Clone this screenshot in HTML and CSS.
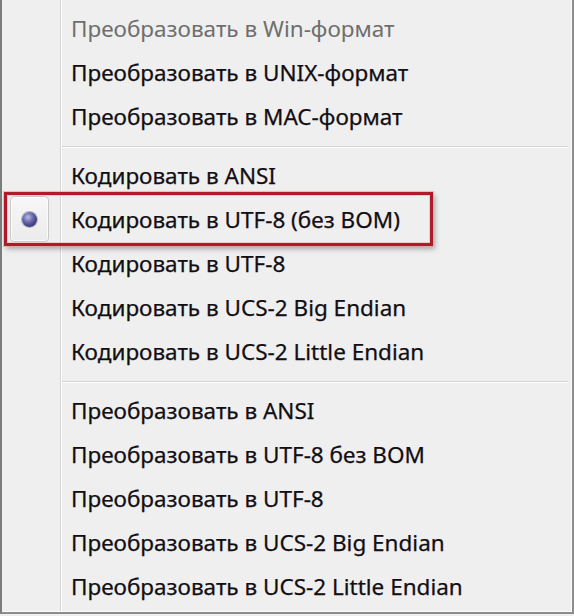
FILE: index.html
```html
<!DOCTYPE html>
<html lang="ru">
<head>
<meta charset="utf-8">
<link rel="stylesheet" href="styles.css">
</head>
<body>
<div class="menu">
  <div class="item disabled"><span class="label">Преобразовать в Win-формат</span></div>
  <div class="item"><span class="label">Преобразовать в UNIX-формат</span></div>
  <div class="item"><span class="label">Преобразовать в MAC-формат</span></div>
  <div class="sep"></div>
  <div class="item"><span class="label">Кодировать в ANSI</span></div>
  <div class="item checked highlight">
    <span class="check"><span class="dot"></span></span>
    <span class="label">Кодировать в UTF-8 (без BOM)</span>
  </div>
  <div class="item"><span class="label">Кодировать в UTF-8</span></div>
  <div class="item"><span class="label">Кодировать в UCS-2 Big Endian</span></div>
  <div class="item"><span class="label">Кодировать в UCS-2 Little Endian</span></div>
  <div class="sep"></div>
  <div class="item"><span class="label">Преобразовать в ANSI</span></div>
  <div class="item"><span class="label">Преобразовать в UTF-8 без BOM</span></div>
  <div class="item"><span class="label">Преобразовать в UTF-8</span></div>
  <div class="item"><span class="label">Преобразовать в UCS-2 Big Endian</span></div>
  <div class="item"><span class="label">Преобразовать в UCS-2 Little Endian</span></div>
</div>
</body>
</html>
```
FILE: styles.css
```css
html, body {
  margin: 0;
  padding: 0;
  background: #efefef;
}

.menu {
  box-sizing: border-box;
  width: 574px;
  height: 614px;
  padding-top: 6px;
  border-left: 2px solid #7c7c7c;
  border-right: 2px solid #8c8c8c;
  border-bottom: 2px solid #8c8c8c;
  background:
    linear-gradient(to right, transparent 58px, #d6d6d6 58px, #d6d6d6 59px, #ffffff 59px, #ffffff 60px, transparent 60px),
    #efefef;
  box-shadow: inset -1px -1px 0 #fafafa;
  font-family: "Noto Sans", "Open Sans", sans-serif;
  font-size: 22.5px;
  color: #120e12;
}

.item {
  position: relative;
  display: flex;
  align-items: center;
  height: 44px;
}

.label {
  margin-left: 69px;
  white-space: nowrap;
  -webkit-text-stroke: 0.25px currentColor;
}

.disabled {
  color: #6e6e6e;
}

.disabled .label {
  -webkit-text-stroke: 0;
}

.sep {
  height: 15px;
  margin-left: 60px;
  margin-right: 4px;
  box-sizing: border-box;
  padding-top: 8px;
}

.sep::before {
  content: "";
  display: block;
  height: 1px;
  background: #d4d4d4;
  border-bottom: 1px solid #ffffff;
}

.check {
  position: absolute;
  left: 8px;
  top: -1px;
  width: 39px;
  height: 46px;
  box-sizing: border-box;
  border: 1px solid #c9c9c9;
  border-radius: 4px;
  background: linear-gradient(#f7f7f7, #ebebeb);
  box-shadow: inset 0 0 0 1px #fbfbfb;
  display: flex;
  align-items: center;
  justify-content: center;
}

.dot {
  width: 15px;
  height: 15px;
  border-radius: 50%;
  background: radial-gradient(circle at 40% 35%, #b9bbe8 0%, #6466a8 40%, #2b2d6a 80%, #22234f 100%);
  box-shadow: 0 0 0 1px rgba(60, 60, 110, 0.35);
}

.highlight::after {
  content: "";
  position: absolute;
  left: 2px;
  top: -5px;
  width: 429px;
  height: 54px;
  box-sizing: border-box;
  border: 3px solid #b01b29;
  box-shadow:
    0 0 0 1px rgba(235, 160, 165, 0.6),
    2px 3px 5px rgba(0, 0, 0, 0.3),
    inset 0 0 0 1px rgba(240, 175, 180, 0.6);
  pointer-events: none;
}
```
